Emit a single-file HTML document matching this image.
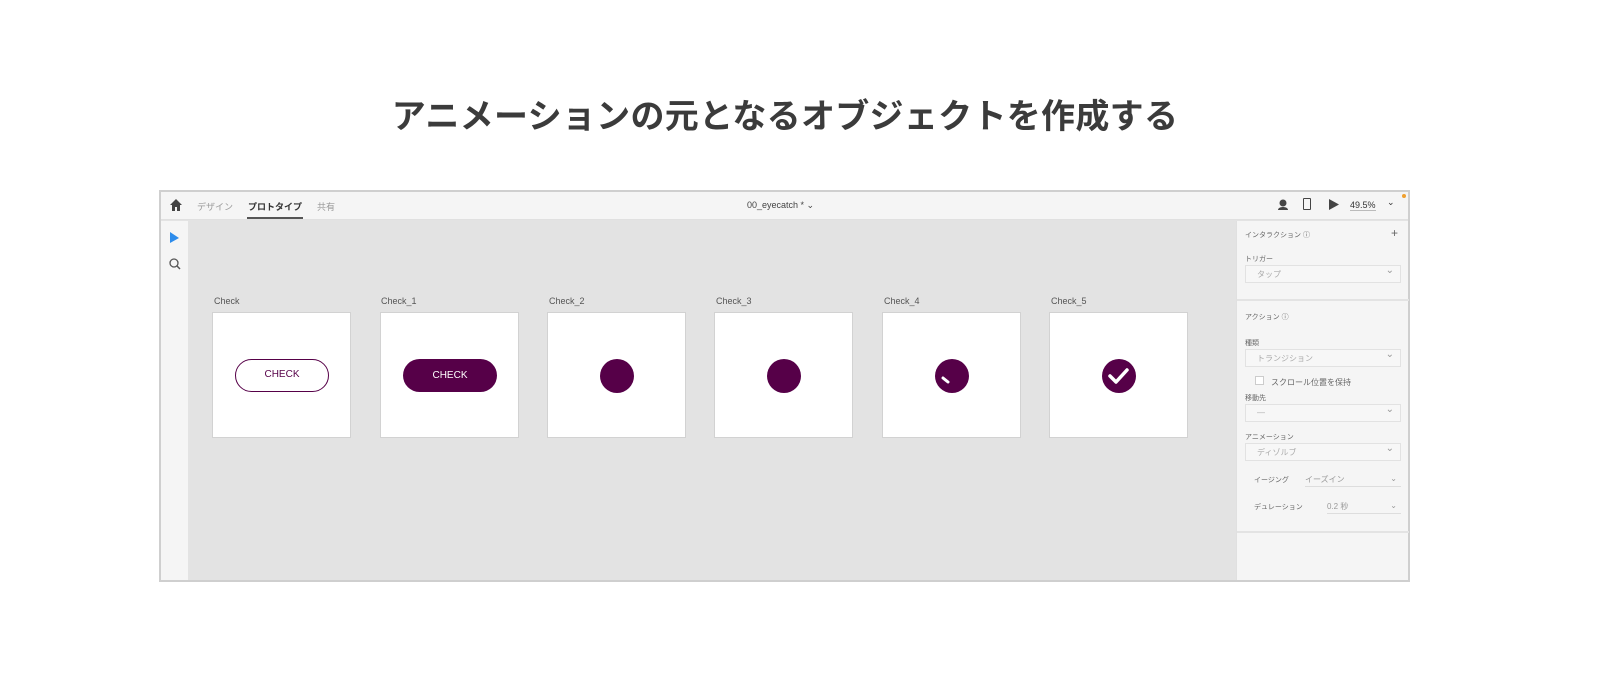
<!DOCTYPE html><html><head><meta charset="utf-8"><style>
*{margin:0;padding:0;box-sizing:border-box}
body{width:1600px;height:694px;background:#fff;font-family:"Liberation Sans","Noto Sans CJK JP",sans-serif;position:relative;overflow:hidden}
.a{position:absolute}
h1{position:absolute;top:89px;left:0;width:1570px;text-align:center;font-size:34px;font-weight:bold;color:#3b3b3b;letter-spacing:0.3px}
.win{left:159px;top:190px;width:1251px;height:392px;border:2px solid #cfcfcf;background:#e3e3e3}
.ab{position:absolute;top:120px;width:139px;height:126px;background:#fff;border:1px solid #d2d2d2}
.lb{position:absolute;top:104px;font-size:9px;color:#555}
.t{font-size:9px;color:#666;position:absolute}
.s{font-size:7px;color:#666;position:absolute}
.dd{position:absolute;left:8px;width:156px;height:18px;border:1px solid #e2e2e2;background:#f7f7f7;font-size:8px;color:#aaa;padding:3px 0 0 11px}
.dd:after{content:"⌄";position:absolute;right:6px;top:-1px;color:#999;font-size:10px}
</style></head><body>
<h1>アニメーションの元となるオブジェクトを作成する</h1>
<div class="a win">
 <div class="a" style="left:0;top:0;width:1247px;height:28px;background:#f5f5f5;border-bottom:1px solid #e0e0e0"></div>
 <svg class="a" style="left:8px;top:6px" width="14" height="14" viewBox="0 0 14 14"><path d="M7 1L1 7h2v6h3V9h2v4h3V7h2z" fill="#444"/></svg>
 <div class="t" style="left:36px;top:8px;color:#999">デザイン</div>
 <div class="t" style="left:87px;top:8px;color:#333;font-weight:bold">プロトタイプ</div>
 <div class="a" style="left:86px;top:25px;width:56px;height:2px;background:#555"></div>
 <div class="t" style="left:156px;top:8px;color:#999">共有</div>
 <div class="t" style="left:586px;top:8px;color:#444">00_eyecatch * ⌄</div>
 <svg class="a" style="left:1116px;top:6px" width="14" height="14"><circle cx="6" cy="5" r="3.5" fill="#444"/><path d="M1 12c0-4 10-4 10 0z" fill="#444"/></svg>
 <div class="a" style="left:1142px;top:6px;width:8px;height:12px;border:1.5px solid #444;border-radius:1px"></div>
 <svg class="a" style="left:1168px;top:7px" width="10" height="11"><path d="M0 0L10 5.5L0 11z" fill="#444"/></svg>
 <div class="t" style="left:1189px;top:8px;color:#333;border-bottom:1px solid #bbb">49.5%</div>
 <div class="t" style="left:1226px;top:5px;color:#333">⌄</div>
 <div class="a" style="left:1241px;top:2px;width:4px;height:4px;border-radius:50%;background:#f0a030"></div>
 <div class="a" style="left:0;top:29px;width:27px;height:359px;background:#f5f5f5"></div>
 <svg class="a" style="left:9px;top:40px" width="9" height="11"><path d="M0 0L9 6L0 11z" fill="#2d8ceb"/></svg>
 <svg class="a" style="left:8px;top:66px" width="12" height="12"><circle cx="5" cy="5" r="4" stroke="#555" stroke-width="1.3" fill="none"/><path d="M8 8l3 3" stroke="#555" stroke-width="1.5"/></svg>
 <div class="lb" style="left:53px">Check</div><div class="ab" style="left:51px"><div class="a" style="left:22px;top:46px;width:94px;height:33px;border:1.5px solid #560048;border-radius:17px;font-size:10px;color:#560048;text-align:center;line-height:30px">CHECK</div></div>
 <div class="lb" style="left:220px">Check_1</div><div class="ab" style="left:219px"><div class="a" style="left:22px;top:46px;width:94px;height:33px;background:#560048;border-radius:17px;font-size:10px;color:#fff;text-align:center;line-height:33px">CHECK</div></div>
 <div class="lb" style="left:388px">Check_2</div><div class="ab" style="left:386px"><div class="a" style="left:52px;top:46px;width:34px;height:34px;background:#560048;border-radius:50%"></div></div>
 <div class="lb" style="left:555px">Check_3</div><div class="ab" style="left:553px"><div class="a" style="left:52px;top:46px;width:34px;height:34px;background:#560048;border-radius:50%"></div></div>
 <div class="lb" style="left:723px">Check_4</div><div class="ab" style="left:721px"><svg class="a" style="left:52px;top:46px" width="34" height="34"><circle cx="17" cy="17" r="17" fill="#560048"/><path d="M8 19l5 4" stroke="#fff" stroke-width="3" stroke-linecap="round"/></svg></div>
 <div class="lb" style="left:890px">Check_5</div><div class="ab" style="left:888px"><svg class="a" style="left:52px;top:46px" width="34" height="34"><circle cx="17" cy="17" r="17" fill="#560048"/><path d="M8 17l6 6l11-12" stroke="#fff" stroke-width="3.5" fill="none" stroke-linecap="round" stroke-linejoin="round"/></svg></div>
 <div class="a" style="left:1075px;top:29px;width:172px;height:359px;background:#f5f5f5;border-left:1px solid #e0e0e0">
  <div class="s" style="left:8px;top:9px">インタラクション ⓘ</div><div class="t" style="left:154px;top:5px;font-size:12px">+</div>
  <div class="s" style="left:8px;top:33px">トリガー</div><div class="dd" style="top:44px">タップ</div>
  <div class="a" style="left:0;top:78px;width:172px;height:2px;background:#e3e3e3"></div>
  <div class="s" style="left:8px;top:91px">アクション ⓘ</div>
  <div class="s" style="left:8px;top:117px">種類</div><div class="dd" style="top:128px">トランジション</div>
  <div class="a" style="left:18px;top:155px;width:9px;height:9px;border:1px solid #ccc;background:#fff"></div><div class="s" style="left:34px;top:156px;font-size:8px">スクロール位置を保持</div>
  <div class="s" style="left:8px;top:172px">移動先</div><div class="dd" style="top:183px">—</div>
  <div class="s" style="left:8px;top:211px">アニメーション</div><div class="dd" style="top:222px">ディゾルブ</div>
  <div class="s" style="left:17px;top:254px">イージング</div><div class="s" style="left:68px;top:253px;font-size:8px;color:#999;width:96px;border-bottom:1px solid #ddd;height:13px">イーズイン<span style="float:right;margin-right:4px">⌄</span></div>
  <div class="s" style="left:17px;top:281px">デュレーション</div><div class="s" style="left:90px;top:280px;font-size:8px;color:#999;width:74px;border-bottom:1px solid #ddd;height:13px">0.2 秒<span style="float:right;margin-right:4px">⌄</span></div>
  <div class="a" style="left:0;top:310px;width:172px;height:2px;background:#e3e3e3"></div>
 </div>
</div>
</body></html>
